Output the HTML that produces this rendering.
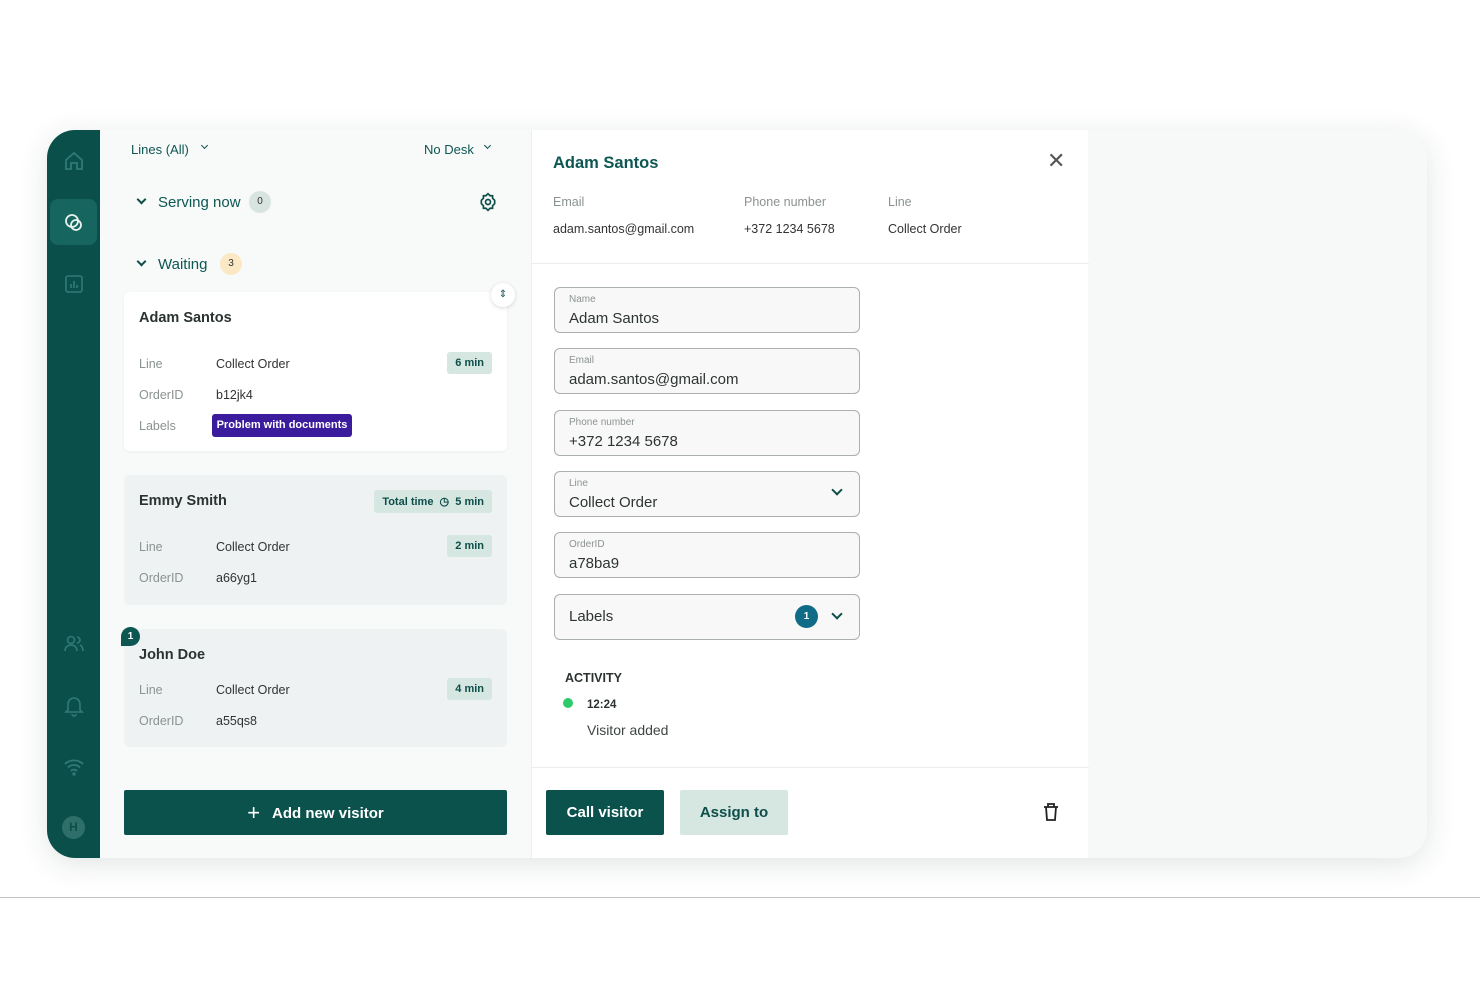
<!DOCTYPE html>
<html><head><style>
*{box-sizing:border-box;margin:0;padding:0}
body{width:1480px;height:987px;background:#fff;font-family:"Liberation Sans",sans-serif;position:relative;overflow:hidden;color:#2b3533}
.a{position:absolute}
.frame{left:47px;top:130px;width:1380px;height:728px;border-radius:28px;background:#f7f8f8;box-shadow:0 6px 30px rgba(0,40,40,.12);overflow:hidden}
.side{left:0;top:0;width:53px;height:728px;background:#0b4f4b}
.mid{left:53px;top:0;width:431px;height:728px;background:#f8f9f9}
.det{left:484px;top:0;width:557px;height:728px;background:#fff;border-left:1px solid #eef0f0}
.teal{color:#0d5752}
.card{position:absolute;left:24px;width:383px;border-radius:6px}
.lab{color:#8a9391;font-size:12.5px}
.val{color:#333;font-size:12.5px}
.pill{position:absolute;background:#d6e6e1;color:#0d4e49;font-size:11px;font-weight:bold;border-radius:3px;padding:5px 8px}
.inp{position:absolute;left:22px;width:306px;height:46px;border:1.5px solid #a9b0ae;border-radius:6px;background:#f8f8f8}
.inp .l{position:absolute;left:14px;top:6px;font-size:10px;color:#8c9390}
.inp .v{position:absolute;left:14px;top:22px;font-size:15px;color:#2d3432}
.chev{position:absolute;width:8px;height:8px;border-right:2px solid #0d4e49;border-bottom:2px solid #0d4e49;transform:rotate(45deg)}
</style></head><body>
<div class="a" style="left:0;top:897px;width:1480px;height:1px;background:#bfc4c4"></div>
<div class="a frame">
 <div class="a side">
  <svg class="a" style="left:16px;top:20px" width="22" height="22" viewBox="0 0 22 22" fill="none" stroke="#2f7a74" stroke-width="1.8"><path d="M3 10 L11 3 L19 10 V19 H14 V13 H8 V19 H3 Z"/></svg>
  <div class="a" style="left:3px;top:69px;width:47px;height:46px;border-radius:8px;background:#16665f"></div>
  <svg class="a" style="left:16px;top:82px" width="22" height="22" viewBox="0 0 22 22" fill="none" stroke="#e8f2f0" stroke-width="1.8"><circle cx="9" cy="9" r="6"/><circle cx="13" cy="13" r="5"/></svg>
  <svg class="a" style="left:17px;top:144px" width="20" height="20" viewBox="0 0 20 20" fill="none" stroke="#2f7a74" stroke-width="1.6"><rect x="2" y="2" width="16" height="16" rx="2"/><path d="M7 14V10M10 14V7M13 14V11"/></svg>
  <svg class="a" style="left:16px;top:504px" width="22" height="20" viewBox="0 0 22 20" fill="none" stroke="#2f7a74" stroke-width="1.6"><circle cx="8" cy="6" r="3.5"/><path d="M2 17c0-4 3-6 6-6s6 2 6 6"/><path d="M14 3a3 3 0 010 6M17 11c2 1 3 3 3 6"/></svg>
  <svg class="a" style="left:17px;top:565px" width="20" height="22" viewBox="0 0 20 22" fill="none" stroke="#2f7a74" stroke-width="1.6"><path d="M4 15V9a6 6 0 0112 0v6l2 2H2z"/><path d="M8 19a2 2 0 004 0"/></svg>
  <svg class="a" style="left:16px;top:628px" width="22" height="18" viewBox="0 0 22 18" fill="none" stroke="#2f7a74" stroke-width="1.8"><path d="M2 6a13 13 0 0118 0M5 9.5a8.5 8.5 0 0112 0M8 13a4 4 0 016 0"/><circle cx="11" cy="16" r="0.8" fill="#2f7a74"/></svg>
  <div class="a" style="left:15px;top:686px;width:23px;height:23px;border-radius:50%;background:#2f6f6a;color:#0b4f4b;font-size:12px;font-weight:bold;text-align:center;line-height:23px">H</div>
 </div>
 <div class="a mid">
  <div class="a teal" style="left:31px;top:12px;font-size:13px">Lines (All)</div>
  <div class="chev" style="left:102px;top:13px;width:5px;height:5px;border-width:1.5px"></div>
  <div class="a teal" style="left:324px;top:12px;font-size:13px">No Desk</div>
  <div class="chev" style="left:385px;top:13px;width:5px;height:5px;border-width:1.5px"></div>
  <div class="chev" style="left:38px;top:66px;width:7px;height:7px"></div>
  <div class="a teal" style="left:58px;top:64px;font-size:15px">Serving now</div>
  <div class="a" style="left:149px;top:61px;width:22px;height:22px;border-radius:50%;background:#d7e4e0;font-size:10px;text-align:center;line-height:22px;color:#333">0</div>
  <svg class="a" style="left:378px;top:62px" width="20" height="20" viewBox="0 0 24 24" fill="none" stroke="#0d4e49" stroke-width="2"><circle cx="12" cy="12" r="3"/><path d="M12 2l2.5 2.5h3v3L20 10v4l-2.5 2.5v3h-3L12 22l-2.5-2.5h-3v-3L4 14v-4l2.5-2.5v-3h3z"/></svg>
  <div class="chev" style="left:38px;top:128px;width:7px;height:7px"></div>
  <div class="a teal" style="left:58px;top:126px;font-size:15px">Waiting</div>
  <div class="a" style="left:120px;top:123px;width:22px;height:22px;border-radius:50%;background:#fbe8c4;font-size:10px;text-align:center;line-height:22px;color:#333">3</div>

  <div class="card" style="top:162px;height:159px;background:#fff;box-shadow:0 1px 3px rgba(0,0,0,.04)">
   <div class="a" style="left:15px;top:18px;font-size:14.5px;font-weight:bold;color:#2b3331">Adam Santos</div>
   <div class="a lab" style="left:15px;top:65px">Line</div><div class="a val" style="left:92px;top:65px">Collect Order</div>
   <div class="pill" style="right:15px;top:60px">6 min</div>
   <div class="a lab" style="left:15px;top:96px">OrderID</div><div class="a val" style="left:92px;top:96px">b12jk4</div>
   <div class="a lab" style="left:15px;top:127px">Labels</div>
   <div class="a" style="left:88px;top:122px;width:140px;height:23px;background:#3a1c9c;color:#fff;font-size:11px;font-weight:bold;border-radius:3px;text-align:center;line-height:23px">Problem with documents</div>
  </div>
  <div class="a" style="left:391px;top:153px;width:24px;height:24px;border-radius:50%;background:#fff;box-shadow:0 1px 4px rgba(0,0,0,.15);font-size:10px;text-align:center;line-height:24px;color:#0d4e49">⇕</div>

  <div class="card" style="top:345px;height:130px;background:#eef2f2">
   <div class="a" style="left:15px;top:18px;font-size:14.5px;font-weight:bold;color:#2b3331">Emmy Smith</div>
   <div class="pill" style="right:15px;top:15px">Total time &nbsp;◷&nbsp; 5 min</div>
   <div class="a lab" style="left:15px;top:65px">Line</div><div class="a val" style="left:92px;top:65px">Collect Order</div>
   <div class="pill" style="right:15px;top:60px">2 min</div>
   <div class="a lab" style="left:15px;top:96px">OrderID</div><div class="a val" style="left:92px;top:96px">a66yg1</div>
  </div>

  <div class="card" style="top:499px;height:118px;background:#eef2f2">
   <div class="a" style="left:15px;top:18px;font-size:14.5px;font-weight:bold;color:#2b3331">John Doe</div>
   <div class="a lab" style="left:15px;top:54px">Line</div><div class="a val" style="left:92px;top:54px">Collect Order</div>
   <div class="pill" style="right:15px;top:49px">4 min</div>
   <div class="a lab" style="left:15px;top:85px">OrderID</div><div class="a val" style="left:92px;top:85px">a55qs8</div>
  </div>
  <div class="a" style="left:21px;top:497px;width:19px;height:19px;border-radius:50% 50% 50% 0;background:#0d5752;color:#fff;font-size:10px;font-weight:bold;text-align:center;line-height:19px">1</div>

  <div class="a" style="left:24px;top:660px;width:383px;height:45px;background:#0b524d;border-radius:2px;color:#fff;font-size:15px;font-weight:bold;text-align:center;line-height:45px"><span style="font-size:22px;font-weight:normal;vertical-align:-2px">+</span>&nbsp;&nbsp; Add new visitor</div>
 </div>

 <div class="a det">
  <div class="a teal" style="left:21px;top:24px;font-size:16.5px;font-weight:bold">Adam Santos</div>
  <div class="a" style="left:515px;top:18px;font-size:22px;color:#555">✕</div>
  <div class="a lab" style="left:21px;top:65px">Email</div><div class="a val" style="left:21px;top:92px">adam.santos@gmail.com</div>
  <div class="a lab" style="left:212px;top:65px">Phone number</div><div class="a val" style="left:212px;top:92px">+372 1234 5678</div>
  <div class="a lab" style="left:356px;top:65px">Line</div><div class="a val" style="left:356px;top:92px">Collect Order</div>
  <div class="a" style="left:0;top:133px;width:557px;height:1px;background:#eceeee"></div>
  <div class="inp" style="top:157px"><div class="l">Name</div><div class="v">Adam Santos</div></div>
  <div class="inp" style="top:218px"><div class="l">Email</div><div class="v">adam.santos@gmail.com</div></div>
  <div class="inp" style="top:280px"><div class="l">Phone number</div><div class="v">+372 1234 5678</div></div>
  <div class="inp" style="top:341px"><div class="l">Line</div><div class="v">Collect Order</div><div class="chev" style="left:278px;top:14px"></div></div>
  <div class="inp" style="top:402px"><div class="l">OrderID</div><div class="v">a78ba9</div></div>
  <div class="inp" style="top:464px"><div class="v" style="top:13px">Labels</div>
   <div class="a" style="left:240px;top:10px;width:23px;height:23px;border-radius:50%;background:#0f6b86;color:#fff;font-size:10px;font-weight:bold;text-align:center;line-height:23px">1</div>
   <div class="chev" style="left:278px;top:15px"></div></div>
  <div class="a" style="left:33px;top:541px;font-size:12.5px;font-weight:bold;color:#2b3331">ACTIVITY</div>
  <div class="a" style="left:31px;top:568px;width:10px;height:10px;border-radius:50%;background:#2fcb6b"></div>
  <div class="a" style="left:55px;top:569px;font-size:11.5px;font-weight:bold;color:#2b3331">12:24</div>
  <div class="a" style="left:55px;top:592px;font-size:14px;color:#3e4644">Visitor added</div>
  <div class="a" style="left:0;top:637px;width:557px;height:1px;background:#eceeee"></div>
  <div class="a" style="left:14px;top:660px;width:118px;height:45px;background:#0b524d;border-radius:2px;color:#fff;font-size:15px;font-weight:bold;text-align:center;line-height:45px">Call visitor</div>
  <div class="a" style="left:148px;top:660px;width:108px;height:45px;background:#d6e6e1;border-radius:2px;color:#0d4e49;font-size:15px;font-weight:bold;text-align:center;line-height:45px">Assign to</div>
  <svg class="a" style="left:510px;top:672px" width="18" height="20" viewBox="0 0 18 20" fill="none" stroke="#222" stroke-width="1.8"><path d="M2 5h14M6 5V2h6v3M4 5l1 13h8l1-13"/></svg>
 </div>
</div>
</body></html>
